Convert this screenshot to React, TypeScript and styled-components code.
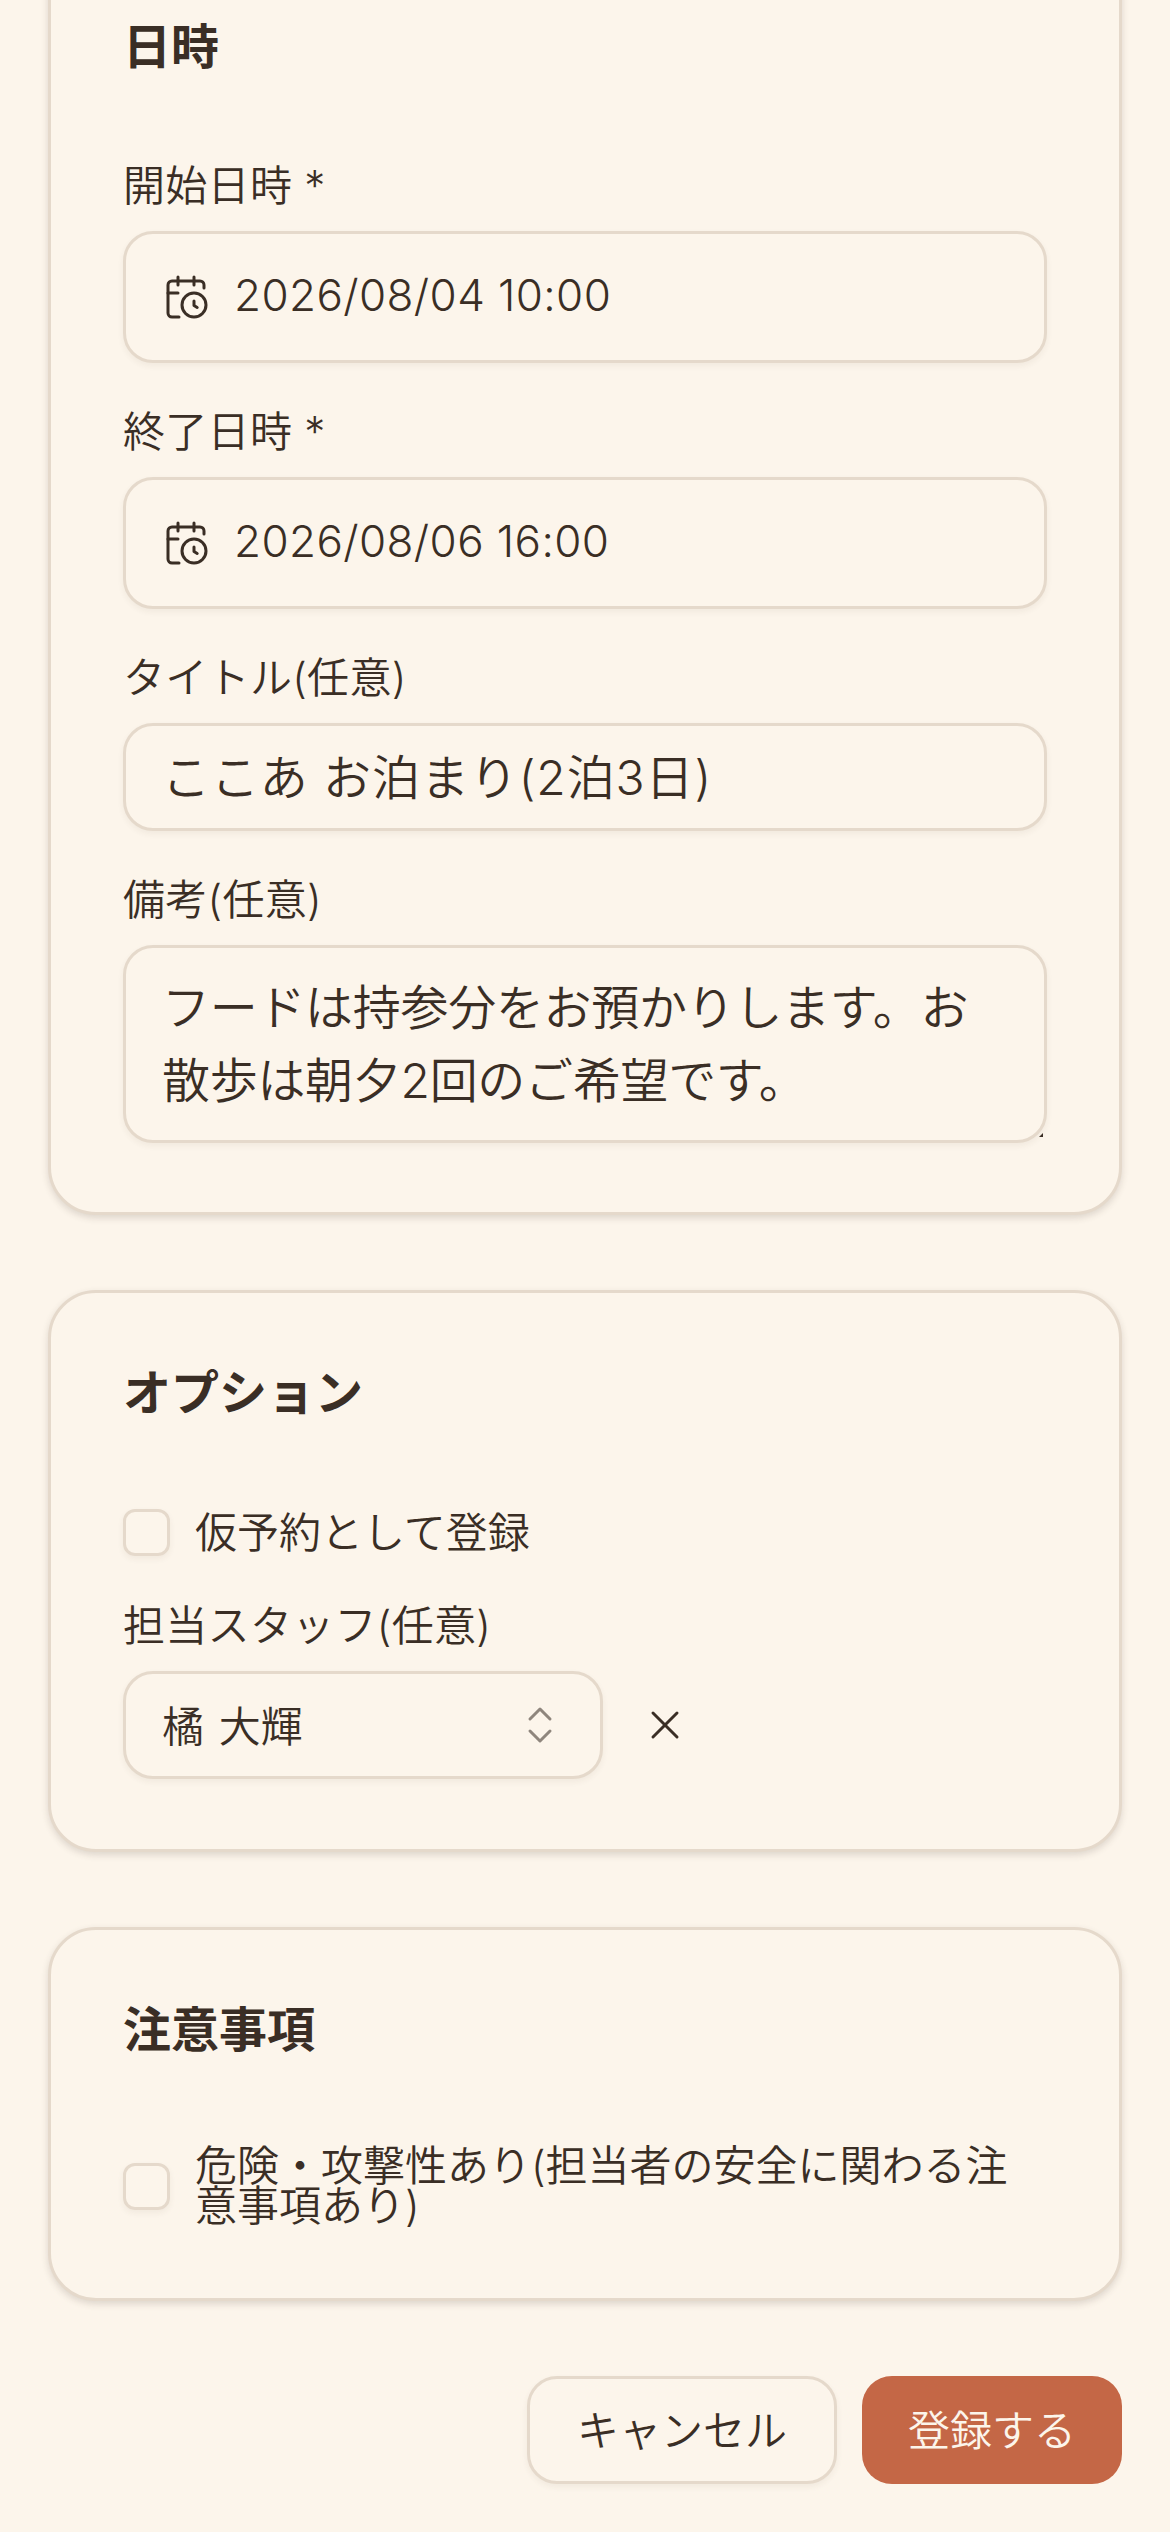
import styled, { createGlobalStyle } from "styled-components";
import { CalendarClock, ChevronsUpDown, X } from "lucide-react";

const GlobalStyle = createGlobalStyle`
  html, body {
    margin: 0;
    padding: 0;
    background: #fcf5eb;
  }
  body {
    font-family: "Inter", "Noto Sans CJK JP", sans-serif;
    font-weight: 350;
    color: #3a2e25;
  }
`;

const Page = styled.div`
  width: 1170px;
  height: 2532px;
  overflow: hidden;
  box-sizing: border-box;
  padding: 0 48px;
  background: #fcf5eb;
`;

// the page is scrolled, so the first card starts above the window
const Scrolled = styled.div`
  margin-top: -56px;
  display: flex;
  flex-direction: column;
  gap: 75px;
`;

const Card = styled.section<{ $bottom?: number }>`
  box-sizing: border-box;
  border: 3px solid #e5d9cb;
  border-radius: 48px;
  padding: 72px 72px ${(p) => p.$bottom ?? 72}px;
  background: #fcf5eb;
  box-shadow: 0 3px 7px rgba(64, 52, 42, 0.16);
`;

const Heading = styled.h2<{ $gap?: number }>`
  margin: 0 0 ${(p) => p.$gap ?? 88}px;
  font-size: 48px;
  line-height: 56px;
  font-weight: 700;
`;

const Label = styled.div<{ $top?: number }>`
  margin: ${(p) => p.$top ?? 0}px 0 24px;
  font-size: 42px;
  line-height: 42px;
  letter-spacing: 0.3px;
`;

const Field = styled.div`
  box-sizing: border-box;
  border: 3px solid #e5d9cb;
  border-radius: 30px;
  box-shadow: 0 3px 6px rgba(64, 52, 42, 0.06);
  background: #fcf5eb;
`;

const DateField = styled(Field)`
  height: 132px;
  display: flex;
  align-items: center;
  gap: 24px;
  padding-left: 36px;
  font-size: 44px;
  letter-spacing: 0.4px;

  span {
    padding-bottom: 5px;
  }
`;

const TextField = styled(Field)`
  height: 108px;
  display: flex;
  align-items: center;
  padding: 0 0 6px 36px;
  font-size: 48px;
  letter-spacing: 0.9px;
`;

const AreaField = styled(Field)`
  position: relative;
  height: 198px;
  padding: 23px 36px 0;
  font-size: 48px;
  line-height: 73px;
  letter-spacing: -0.3px;

  &::after {
    content: "";
    position: absolute;
    right: 1px;
    bottom: 3px;
    width: 4px;
    height: 4px;
    background: #3a2e25;
    clip-path: polygon(100% 0, 100% 100%, 0 100%);
  }
`;

const CheckRow = styled.div`
  display: flex;
  align-items: center;
  gap: 25px;
  font-size: 42px;
  line-height: 40px;
`;

const CheckBox = styled.div`
  flex: none;
  box-sizing: border-box;
  width: 47px;
  height: 47px;
  border: 3px solid #e5d9cb;
  border-radius: 12px;
  box-shadow: 0 3px 6px rgba(64, 52, 42, 0.06);
`;

const SelectRow = styled.div`
  display: flex;
  align-items: center;
  gap: 38px;
`;

const Select = styled(Field)`
  width: 480px;
  height: 108px;
  display: flex;
  align-items: center;
  justify-content: space-between;
  padding: 0 36px 0 36px;
  font-size: 42px;
  word-spacing: 3px;

  span {
    padding-bottom: 4px;
  }

  svg {
    color: #8f867d;
  }
`;

const ClearIcon = styled(X)`
  flex: none;
`;

const Actions = styled.div`
  display: flex;
  justify-content: flex-end;
  gap: 25px;
`;

const Button = styled.button<{ $primary?: boolean }>`
  box-sizing: border-box;
  height: 108px;
  border-radius: 30px;
  font-family: inherit;
  font-weight: inherit;
  font-size: 42px;
  padding: 0 ${(p) => (p.$primary ? 46 : 47)}px 6px;
  border: ${(p) => (p.$primary ? "none" : "3px solid #e5d9cb")};
  color: ${(p) => (p.$primary ? "#fcf5eb" : "#3a2e25")};
  background: ${(p) => (p.$primary ? "#c46746" : "#fcf5eb")};
  box-shadow: ${(p) => (p.$primary ? "none" : "0 3px 6px rgba(64, 52, 42, 0.06)")};
`;

const dateFields = [
  { label: "開始日時 *", value: "2026/08/04 10:00", top: 0 },
  { label: "終了日時 *", value: "2026/08/06 16:00", top: 48 },
];

export default function App() {
  return (
    <>
      <GlobalStyle />
      <Page>
        <Scrolled>
          <Card $bottom={69}>
            <Heading $gap={90}>日時</Heading>
            {dateFields.map((f) => (
              <div key={f.label}>
                <Label $top={f.top}>{f.label}</Label>
                <DateField>
                  <CalendarClock size={48} strokeWidth={1.5} />
                  <span>{f.value}</span>
                </DateField>
              </div>
            ))}
            <Label $top={48}>タイトル(任意)</Label>
            <TextField>ここあ お泊まり(2泊3日)</TextField>
            <Label $top={48}>備考(任意)</Label>
            <AreaField>フードは持参分をお預かりします。お散歩は朝夕2回のご希望です。</AreaField>
          </Card>

          <Card $bottom={70}>
            <Heading>オプション</Heading>
            <CheckRow>
              <CheckBox />
              仮予約として登録
            </CheckRow>
            <Label $top={49}>担当スタッフ(任意)</Label>
            <SelectRow>
              <Select>
                <span>橘 大輝</span>
                <ChevronsUpDown size={48} strokeWidth={1.5} />
              </Select>
              <ClearIcon size={48} strokeWidth={1.5} />
            </SelectRow>
          </Card>

          <Card>
            <Heading>注意事項</Heading>
            <CheckRow>
              <CheckBox />
              危険・攻撃性あり(担当者の安全に関わる注意事項あり)
            </CheckRow>
          </Card>

          <Actions>
            <Button>キャンセル</Button>
            <Button $primary>登録する</Button>
          </Actions>
        </Scrolled>
      </Page>
    </>
  );
}
